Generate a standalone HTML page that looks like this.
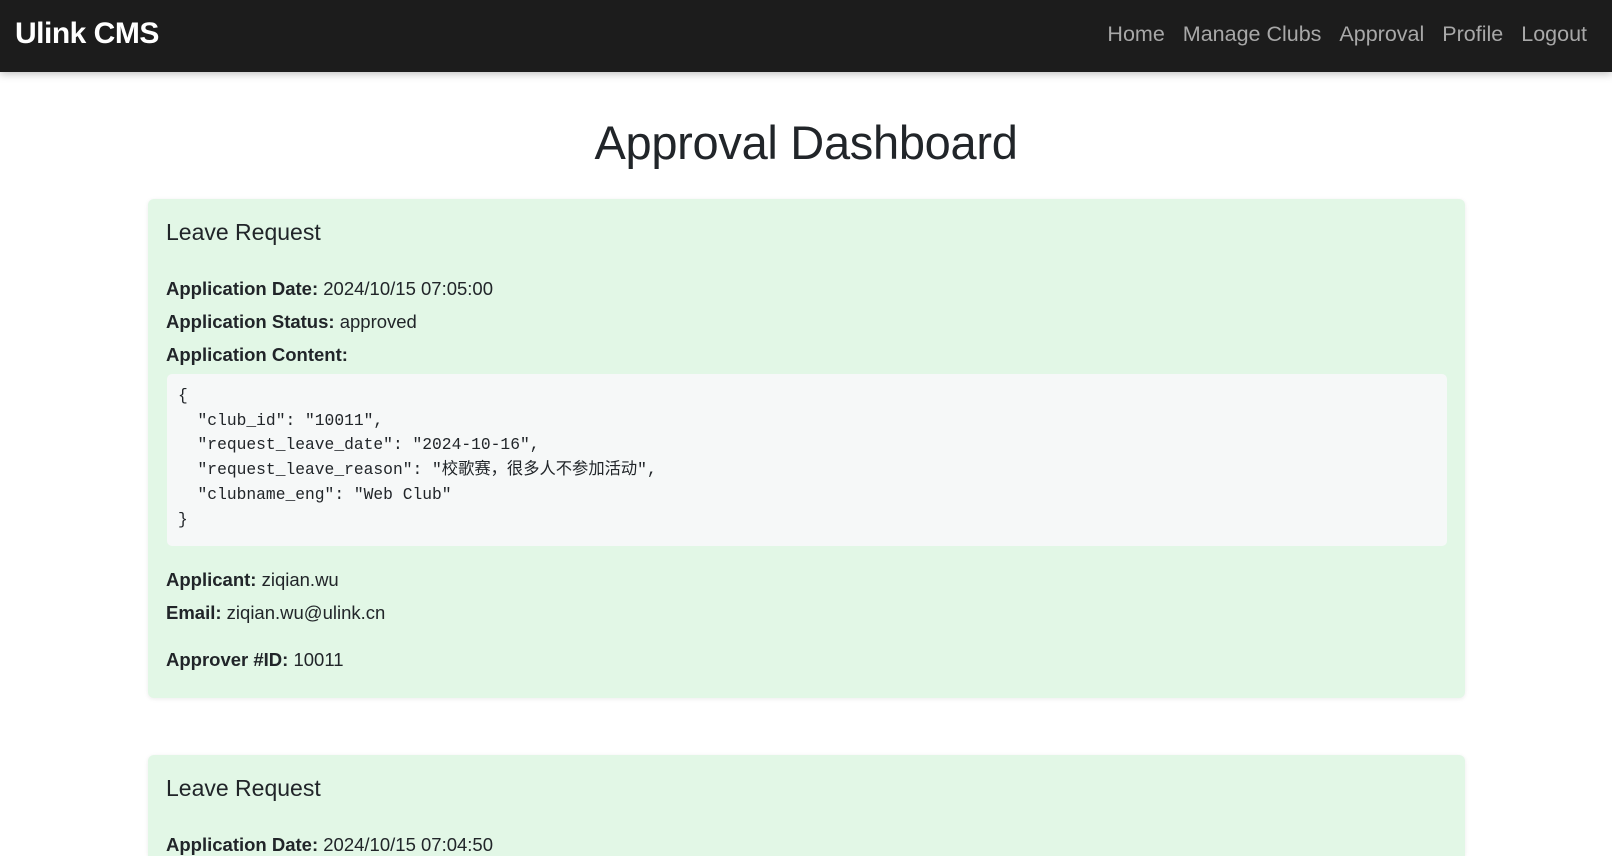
<!DOCTYPE html>
<html><head><meta charset="utf-8"><style>
body{margin:0;background:#fff;font-family:"Liberation Sans","Noto Sans CJK SC",sans-serif;color:#212529;width:1612px;height:856px;overflow:hidden;position:relative}
.nav{position:absolute;left:0;top:0;width:1612px;height:72px;background:#1c1c1c;box-shadow:0 2px 8px rgba(0,0,0,.25)}
.brand{position:absolute;left:15px;top:17px;color:#fff;font-weight:bold;font-size:30px;letter-spacing:-0.5px}
.links{position:absolute;right:25px;top:22px;font-size:21.5px;color:#a8a8a8}
.links span{margin-left:18px}
h1{position:absolute;top:115px;left:0;width:1612px;text-align:center;margin:0;font-size:47px;font-weight:500;letter-spacing:-0.3px}
.card{position:absolute;left:148px;width:1317px;background:#e2f7e6;border-radius:6px;box-shadow:0 1px 4px rgba(0,0,0,.08)}
.t{position:absolute;left:18px;font-size:23px}
.l{position:absolute;left:18px;font-size:18.5px;white-space:nowrap}
.pre{position:absolute;left:19px;width:1280px;top:175px;height:172px;background:#f6f8f8;border-radius:5px;font-family:"Liberation Mono","Noto Sans CJK SC",monospace;font-size:16.3px;line-height:24.7px;white-space:pre;padding:10px 11px;box-sizing:border-box}
</style></head><body>
<div class="nav"><div class="brand">Ulink CMS</div>
<div class="links"><span>Home</span><span>Manage Clubs</span><span>Approval</span><span>Profile</span><span>Logout</span></div></div>
<h1>Approval Dashboard</h1>
<div class="card" style="top:199px;height:499px">
<div class="t" style="top:20px">Leave Request</div>
<div class="l" style="top:79px"><b>Application Date:</b> 2024/10/15 07:05:00</div>
<div class="l" style="top:112px"><b>Application Status:</b> approved</div>
<div class="l" style="top:145px"><b>Application Content:</b></div>
<div class="pre">{
  "club_id": "10011",
  "request_leave_date": "2024-10-16",
  "request_leave_reason": "校歌赛，很多人不参加活动",
  "clubname_eng": "Web Club"
}</div>
<div class="l" style="top:370px"><b>Applicant:</b> ziqian.wu</div>
<div class="l" style="top:403px"><b>Email:</b> ziqian.wu@ulink.cn</div>
<div class="l" style="top:450px"><b>Approver #ID:</b> 10011</div>
</div>
<div class="card" style="top:755px;height:101px;border-radius:6px 6px 0 0">
<div class="t" style="top:20px">Leave Request</div>
<div class="l" style="top:79px"><b>Application Date:</b> 2024/10/15 07:04:50</div>
</div>
</body></html>
